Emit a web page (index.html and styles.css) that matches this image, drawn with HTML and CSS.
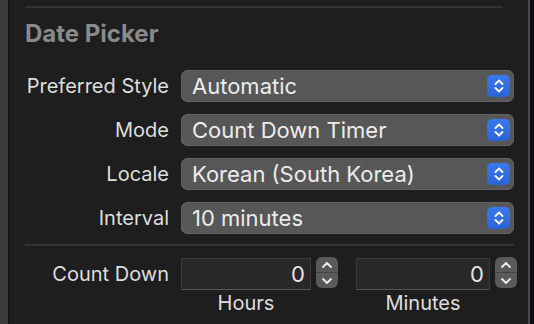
FILE: index.html
```html
<!DOCTYPE html>
<html lang="en">

<head>
  <meta charset="UTF-8" />
  <title>Date Picker Inspector</title>
  <link rel="stylesheet" href="styles.css">
</head>

<body>
  <div class="window">
    <div class="gutter"></div>
    <div class="panel">
      <div class="sep top-sep"></div>
      <h2 class="title">Date Picker</h2>

      <div class="rows">
        <div class="row">
          <label>Preferred Style</label>
          <div class="popup">
            <span>Automatic</span>
            <span class="popup-btn">
              <svg width="12" height="16" viewBox="0 0 12 16"><path d="M2.5 6 L6 2.5 L9.5 6 M2.5 10 L6 13.5 L9.5 10" fill="none" stroke="#fff" stroke-width="1.8" stroke-linecap="round" stroke-linejoin="round"/></svg>
            </span>
          </div>
        </div>
        <div class="row">
          <label>Mode</label>
          <div class="popup">
            <span>Count Down Timer</span>
            <span class="popup-btn">
              <svg width="12" height="16" viewBox="0 0 12 16"><path d="M2.5 6 L6 2.5 L9.5 6 M2.5 10 L6 13.5 L9.5 10" fill="none" stroke="#fff" stroke-width="1.8" stroke-linecap="round" stroke-linejoin="round"/></svg>
            </span>
          </div>
        </div>
        <div class="row">
          <label>Locale</label>
          <div class="popup">
            <span>Korean (South Korea)</span>
            <span class="popup-btn">
              <svg width="12" height="16" viewBox="0 0 12 16"><path d="M2.5 6 L6 2.5 L9.5 6 M2.5 10 L6 13.5 L9.5 10" fill="none" stroke="#fff" stroke-width="1.8" stroke-linecap="round" stroke-linejoin="round"/></svg>
            </span>
          </div>
        </div>
        <div class="row">
          <label>Interval</label>
          <div class="popup">
            <span>10 minutes</span>
            <span class="popup-btn">
              <svg width="12" height="16" viewBox="0 0 12 16"><path d="M2.5 6 L6 2.5 L9.5 6 M2.5 10 L6 13.5 L9.5 10" fill="none" stroke="#fff" stroke-width="1.8" stroke-linecap="round" stroke-linejoin="round"/></svg>
            </span>
          </div>
        </div>
      </div>

      <div class="sep mid-sep"></div>

      <div class="count-row">
        <label>Count Down</label>
        <div class="unit">
          <div class="field-wrap">
            <div class="field">0</div>
            <div class="stepper">
              <span><svg width="12" height="8" viewBox="0 0 12 8"><path d="M2 6 L6 2 L10 6" fill="none" stroke="#eee" stroke-width="1.8" stroke-linecap="round" stroke-linejoin="round"/></svg></span>
              <span><svg width="12" height="8" viewBox="0 0 12 8"><path d="M2 2 L6 6 L10 2" fill="none" stroke="#eee" stroke-width="1.8" stroke-linecap="round" stroke-linejoin="round"/></svg></span>
            </div>
          </div>
          <div class="unit-label">Hours</div>
        </div>
        <div class="unit">
          <div class="field-wrap">
            <div class="field wide">0</div>
            <div class="stepper">
              <span><svg width="12" height="8" viewBox="0 0 12 8"><path d="M2 6 L6 2 L10 6" fill="none" stroke="#eee" stroke-width="1.8" stroke-linecap="round" stroke-linejoin="round"/></svg></span>
              <span><svg width="12" height="8" viewBox="0 0 12 8"><path d="M2 2 L6 6 L10 2" fill="none" stroke="#eee" stroke-width="1.8" stroke-linecap="round" stroke-linejoin="round"/></svg></span>
            </div>
          </div>
          <div class="unit-label wide">Minutes</div>
        </div>
      </div>
    </div>
    <div class="edge"></div>
  </div>
</body>

</html>
```

FILE: styles.css
```css
* {
  box-sizing: border-box;
  margin: 0;
  padding: 0;
  font-family: Inter, 'Liberation Sans', sans-serif;
}

body {
  background-color: #0b0f14;
  width: 534px;
  height: 324px;
  overflow: hidden;
}

.window {
  display: flex;
  height: 324px;
}

.gutter {
  width: 9px;
  background: #3b3b3b;
  border-right: 1px solid #111;
}

.panel {
  width: 519px;
  flex-shrink: 0;
  background: #1e1e1e;
  padding: 0 14px 0 16px;
}

.edge {
  width: 2px;
  flex-shrink: 0;
  background: #4a4a4a;
}

.sep {
  height: 2px;
  background: #333;
}

.top-sep {
  margin-top: 6px;
  width: 478px;
}

.title {
  font-size: 24px;
  font-weight: 700;
  color: #8a8a8a;
  margin-top: 11px;
  line-height: 30px;
}

.rows {
  display: flex;
  flex-direction: column;
  gap: 12px;
  margin-top: 21px;
}

.row {
  display: flex;
  align-items: center;
  gap: 12px;
}

.row label,
.count-row label {
  width: 144px;
  flex-shrink: 0;
  text-align: right;
  color: #dedede;
  font-size: 20px;
  white-space: nowrap;
}

.popup {
  flex: 1;
  height: 32px;
  background: #575757;
  border-radius: 7px;
  display: flex;
  align-items: center;
  justify-content: space-between;
  padding: 0 4px 0 11px;
  color: #ececec;
  font-size: 22px;
  box-shadow: 0 0 0 1px #626262 inset;
}

.popup-btn {
  width: 23px;
  height: 22px;
  border-radius: 5px;
  background: linear-gradient(#3a78ee, #2a63d8);
  display: flex;
  align-items: center;
  justify-content: center;
}

.mid-sep {
  margin-top: 10px;
}

.count-row {
  display: flex;
  gap: 12px;
  margin-top: 12px;
}

.count-row label {
  line-height: 32px;
}

.unit {
  display: flex;
  flex-direction: column;
  flex-shrink: 0;
}

.field-wrap {
  display: flex;
  align-items: center;
  gap: 5px;
}

.unit + .unit {
  margin-left: 6px;
}

.field {
  width: 130px;
  height: 32px;
  background: #282828;
  border: 1px solid #3a3a3a;
  border-bottom-color: #555;
  color: #e4e4e4;
  font-size: 22px;
  text-align: right;
  padding-right: 5px;
  line-height: 30px;
}

.field.wide {
  width: 134px;
}

.stepper {
  width: 22px;
  height: 31px;
  margin-top: -3px;
  border-radius: 6px;
  background: #5a5a5a;
  display: flex;
  flex-direction: column;
}

.stepper span {
  flex: 1;
  display: flex;
  align-items: center;
  justify-content: center;
}

.stepper span + span {
  border-top: 1px solid #444;
}

.unit-label {
  color: #dedede;
  font-size: 20px;
  text-align: center;
  width: 130px;
  margin-top: 1px;
}

.unit-label.wide {
  width: 134px;
}
```
